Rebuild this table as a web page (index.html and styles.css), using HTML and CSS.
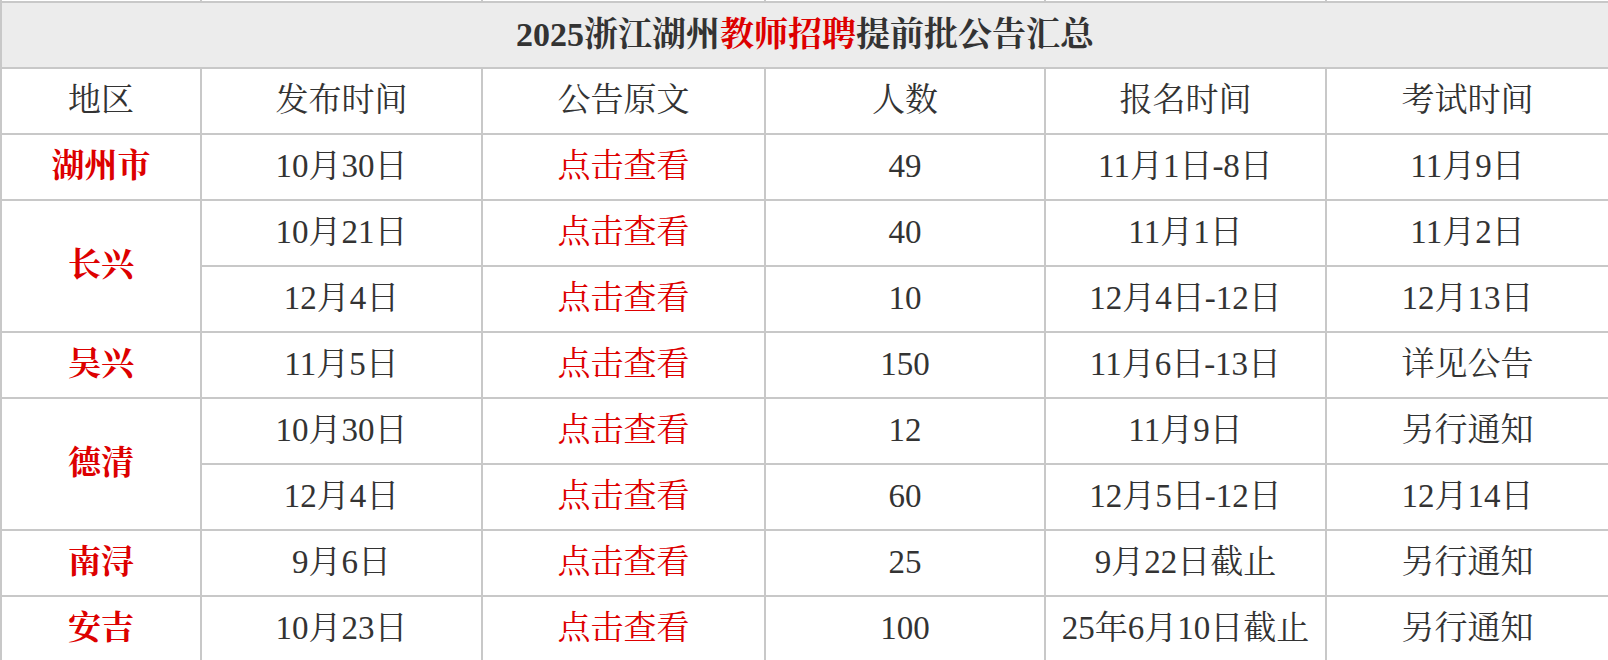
FILE: index.html
```html
<!DOCTYPE html>
<html lang="zh-CN">
<head>
<meta charset="utf-8">
<title>2025浙江湖州教师招聘提前批公告汇总</title>
<link rel="stylesheet" href="styles.css">
</head>
<body>
<table class="summary">
  <colgroup>
    <col class="c-region">
    <col class="c-date">
    <col class="c-link">
    <col class="c-num">
    <col class="c-reg">
    <col class="c-exam">
  </colgroup>
  <tbody>
    <tr class="stub"><td></td><td></td><td></td><td></td><td></td><td></td></tr>
    <tr class="title-row">
      <td colspan="6" class="title">2025浙江湖州<span class="red">教师招聘</span>提前批公告汇总</td>
    </tr>
    <tr class="head">
      <td>地区</td><td>发布时间</td><td>公告原文</td><td>人数</td><td>报名时间</td><td>考试时间</td>
    </tr>
    <tr>
      <td class="region">湖州市</td><td>10月30日</td><td class="link">点击查看</td><td>49</td><td>11月1日-8日</td><td>11月9日</td>
    </tr>
    <tr>
      <td class="region" rowspan="2">长兴</td><td>10月21日</td><td class="link">点击查看</td><td>40</td><td>11月1日</td><td>11月2日</td>
    </tr>
    <tr>
      <td>12月4日</td><td class="link">点击查看</td><td>10</td><td>12月4日-12日</td><td>12月13日</td>
    </tr>
    <tr>
      <td class="region">吴兴</td><td>11月5日</td><td class="link">点击查看</td><td>150</td><td>11月6日-13日</td><td>详见公告</td>
    </tr>
    <tr>
      <td class="region" rowspan="2">德清</td><td>10月30日</td><td class="link">点击查看</td><td>12</td><td>11月9日</td><td>另行通知</td>
    </tr>
    <tr>
      <td>12月4日</td><td class="link">点击查看</td><td>60</td><td>12月5日-12日</td><td>12月14日</td>
    </tr>
    <tr>
      <td class="region">南浔</td><td>9月6日</td><td class="link">点击查看</td><td>25</td><td>9月22日截止</td><td>另行通知</td>
    </tr>
    <tr>
      <td class="region">安吉</td><td>10月23日</td><td class="link">点击查看</td><td>100</td><td>25年6月10日截止</td><td>另行通知</td>
    </tr>
  </tbody>
</table>
</body>
</html>
```
FILE: styles.css
```css
html, body {
  margin: 0;
  padding: 0;
  background: #ffffff;
}
body {
  font-family: "Liberation Serif", "Noto Serif CJK SC", "Noto Sans CJK SC", serif;
  color: #333333;
  overflow: hidden;
}
.summary {
  width: 1608px;
  border-collapse: collapse;
  table-layout: fixed;
}
.c-region { width: 200px; }
.c-date { width: 281px; }
.c-link { width: 283px; }
.c-num { width: 280px; }
.c-reg { width: 281px; }
.c-exam { width: 283px; }
.summary td {
  border: 2px solid #c8c8c8;
  text-align: center;
  vertical-align: middle;
  font-size: 33px;
  height: 64px;
  padding: 0;
  line-height: 1.2;
}
.summary .stub td {
  height: 1px;
  border-top: none;
  line-height: 0;
  font-size: 0;
}
.summary .title {
  background: #ececec;
  font-weight: bold;
  font-size: 34px;
}
.red { color: #dd0000; }
.region {
  color: #dd0000;
  font-weight: bold;
}
.link { color: #dd0000; }
```
